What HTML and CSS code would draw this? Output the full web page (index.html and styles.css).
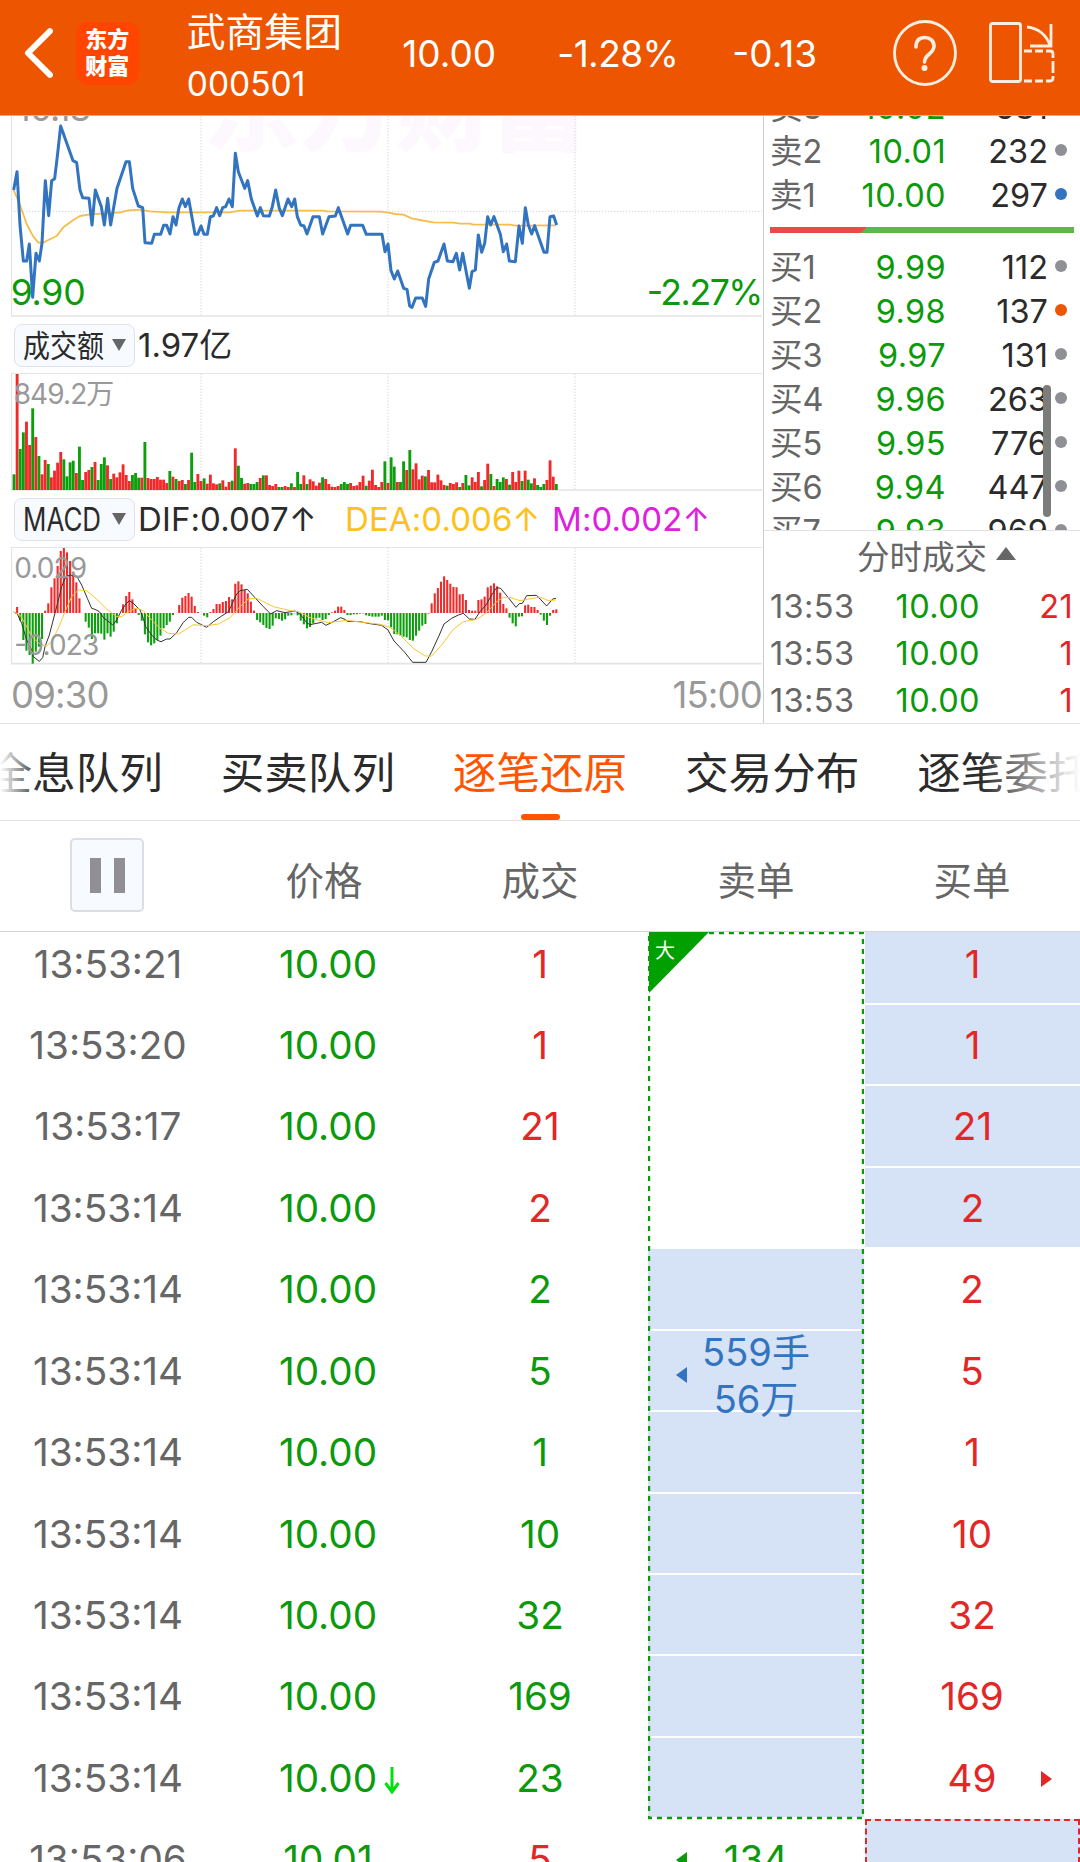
FILE: index.html
```html
<!DOCTYPE html>
<html lang="zh-CN">

<head>
  <meta charset="UTF-8" />
  <title>武商集团 000501</title>
  <meta name="viewport" content="width=device-width, initial-scale=1.0" />
  <link rel="stylesheet" href="styles.css">
</head>

<body>
  <header class="topbar">
    <svg class="back" viewBox="0 0 30 52"><path d="M26 4 L4 26 L26 48" /></svg>
    <div class="logo">东方<br>财富</div>
    <div class="stock">
      <div class="stock-name">武商集团</div>
      <div class="stock-code">000501</div>
    </div>
    <div class="quote">
      <span class="q-price">10.00</span>
      <span class="q-pct">-1.28%</span>
      <span class="q-diff">-0.13</span>
    </div>
    <svg class="help" viewBox="0 0 64 66">
      <ellipse cx="32" cy="33" rx="30.5" ry="31.5" />
      <path d="M23 27 C23 20 27 17.5 32 17.5 C37 17.5 41 21 41 26 C41 34 31.5 34 31.5 42" />
      <circle class="dot" cx="31.5" cy="48" r="3" />
    </svg>
    <svg class="rotate" viewBox="0 0 68 64">
      <rect x="2.5" y="2.5" width="30" height="58" rx="2" />
      <path d="M39 6 C50 7 59 14 62 25 M63 3 V25 H42" />
      <path d="M36 30 H44 M47 30 H55 M58 30 H62 Q65 30 65 33 V37 M65 40 V52 M65 55 V57 Q65 60 62 60 H58 M55 60 H47 M44 60 H36" />
    </svg>
  </header>

  <main>
    <section class="market">
      <div class="charts">
        <!-- chart units: 3 per pixel -->
        <svg class="price-chart" viewBox="33 18 2253 603">
          <text class="watermark" x="610" y="100">东方财富</text>
          <path class="grid" d="M603 18 V618 M1164 18 V618 M1725 18 V618 M33 304 H2286" />
          <path class="frame" d="M34 18 V618 H2286" />
          <text class="gray t35" x="49" y="32" textLength="225">10.13</text>
          <text class="green t35" x="32" y="585" textLength="225">9.90</text>
          <text class="green t35" x="1940" y="585" textLength="350">-2.27%</text>
          <polyline class="avg" points="41,240 60,285 80,342 100,380 115,398 130,398 145,390 170,378 190,352 220,330 240,318 270,313 320,310 360,307 385,301 420,299 450,304 500,307 690,307 720,302 970,302 980,304 1140,305 1165,308 1185,312 1210,314 1235,325 1260,330 1300,337 1360,338 1380,341 1410,341 1420,344 1530,344 1545,347 1668,346" />
          <polyline class="price" points="41,240 51,185 60,345 70,453 80,453 88,402 98,562 108,430 118,453 126,400 136,212 146,317 155,212 164,206 173,130 182,48 219,152 230,158 240,240 248,263 267,265 276,345 286,240 304,290 313,345 323,265 332,345 351,235 378,155 388,155 398,235 415,288 428,293 435,398 455,400 463,373 482,373 491,346 500,346 510,372 519,320 528,345 537,293 547,267 556,290 566,267 585,373 593,373 603,348 612,373 622,373 631,320 640,318 650,293 659,317 668,293 677,290 687,267 697,290 706,130 715,185 734,235 743,212 754,267 772,318 781,293 790,317 808,318 817,290 827,240 838,295 847,317 864,267 875,290 884,267 892,320 902,345 912,348 921,372 939,320 958,320 968,372 987,320 1006,318 1015,293 1043,372 1052,346 1088,346 1099,373 1146,373 1155,425 1164,402 1173,482 1183,507 1193,483 1211,535 1221,538 1229,588 1236,592 1247,564 1267,564 1277,589 1286,507 1303,457 1314,453 1332,402 1342,453 1359,455 1369,430 1379,480 1388,430 1408,535 1416,485 1426,480 1435,375 1445,427 1454,400 1463,320 1472,345 1482,320 1501,373 1510,425 1520,402 1528,453 1546,455 1557,348 1567,400 1576,293 1585,345 1595,372 1604,347 1632,427 1641,427 1650,320 1661,318 1670,345" />
        </svg>

        <div class="indicator">
          <button class="picker"><span class="squeeze cn">成交额</span><i class="caret"></i></button>
          <span class="amount">1.97亿</span>
        </div>

        <svg class="sub-chart" viewBox="33 0 2253 354">
          <path class="grid" d="M603 2 V351 M1164 2 V351 M1725 2 V351" />
          <path class="frame-top" d="M33 1.5 H2286" />
          <path class="frame" d="M34 0 V351 H2286" />
          <g id="volume"></g>
          <text class="gray t28" x="41" y="94" textLength="302">849.2万</text>
        </svg>

        <div class="indicator">
          <button class="picker"><span class="squeeze en">MACD</span><i class="caret"></i></button>
          <span class="dif">DIF:0.007↑</span>
          <span class="dea">DEA:0.006↑</span>
          <span class="m">M:0.002↑</span>
        </div>

        <svg class="sub-chart" viewBox="33 171 2253 354">
          <path class="grid" d="M603 173 V521 M1164 173 V521 M1725 173 V521" />
          <path class="frame-top" d="M33 172.5 H2286" />
          <path class="frame" d="M34 171 V521 H2286" />
          <g id="macd"></g>
          <polyline class="dif-line" points="41,366 52,372 65,400 80,450 95,480 100,500 118,514 128,503 135,470 148,435 155,408 170,350 185,290 193,270 200,258 212,255 232,262 245,285 262,325 275,355 285,358 298,365 312,385 320,390 338,405 350,390 365,360 378,342 388,332 400,340 420,360 430,385 437,410 455,435 470,450 483,455 500,447 510,447 530,428 550,397 566,382 575,382 590,397 620,412 640,395 665,378 685,365 695,345 708,315 720,302 742,298 765,323 790,350 812,372 830,362 855,368 885,363 900,372 920,398 930,404 965,397 978,406 1000,395 1022,383 1035,388 1042,394 1080,395 1110,401 1145,406 1164,420 1182,453 1215,488 1238,517 1278,517 1295,485 1318,435 1332,402 1355,385 1375,375 1390,370 1408,387 1425,388 1440,365 1458,345 1475,315 1490,293 1502,295 1525,323 1548,352 1558,341 1567,340 1580,317 1610,316 1640,348 1658,327 1668,325" />
          <polyline class="dea-line" points="41,366 60,375 75,400 95,440 120,462 140,468 155,455 175,415 195,365 215,320 235,300 260,302 285,323 320,357 350,380 365,380 385,365 410,354 430,362 455,390 480,415 505,430 535,432 560,417 580,404 620,407 655,402 690,383 720,350 745,327 770,325 820,350 870,362 895,365 935,385 985,398 1040,391 1140,403 1170,412 1200,435 1240,475 1275,498 1295,498 1325,465 1360,418 1390,395 1430,388 1460,368 1490,335 1510,322 1530,322 1560,332 1620,321 1645,332 1668,330" />
          <text class="gray t28" x="43" y="263" textLength="218">0.029</text>
          <text class="gray t28" x="43" y="495" textLength="255">-0.023</text>
        </svg>

        <div class="hours"><span>09:30</span><span>15:00</span></div>
      </div>

      <aside class="side">
        <div class="book">
          <div class="level"><span>卖3</span><b>10.02</b><em>681</em><i class="pt"></i></div>
          <div class="level"><span>卖2</span><b>10.01</b><em>232</em><i class="pt"></i></div>
          <div class="level"><span>卖1</span><b>10.00</b><em>297</em><i class="pt blue"></i></div>
          <div class="ratio"></div>
          <div class="level"><span>买1</span><b>9.99</b><em>112</em><i class="pt"></i></div>
          <div class="level"><span>买2</span><b>9.98</b><em>137</em><i class="pt orange"></i></div>
          <div class="level"><span>买3</span><b>9.97</b><em>131</em><i class="pt"></i></div>
          <div class="level"><span>买4</span><b>9.96</b><em>263</em><i class="pt"></i></div>
          <div class="level"><span>买5</span><b>9.95</b><em>776</em><i class="pt"></i></div>
          <div class="level"><span>买6</span><b>9.94</b><em>447</em><i class="pt"></i></div>
          <div class="level"><span>买7</span><b>9.93</b><em>969</em><i class="pt"></i></div>
          <div class="thumb"></div>
        </div>
        <div class="ticks-title">分时成交<i class="caret-up"></i></div>
        <div class="tick"><span>13:53</span><b>10.00</b><em>21</em></div>
        <div class="tick"><span>13:53</span><b>10.00</b><em>1</em></div>
        <div class="tick"><span>13:53</span><b>10.00</b><em>1</em></div>
      </aside>
    </section>

    <nav class="tabs">
      <a>全息队列</a>
      <a>买卖队列</a>
      <a class="active">逐笔还原</a>
      <a>交易分布</a>
      <a>逐笔委托</a>
    </nav>

    <div class="board-head">
      <div><button class="pause"><i></i><i></i></button></div>
      <div>价格</div>
      <div>成交</div>
      <div>卖单</div>
      <div>买单</div>
    </div>

    <section class="board">
      <div class="col time">
        <p>13:53:21</p>
        <p>13:53:20</p>
        <p>13:53:17</p>
        <p>13:53:14</p>
        <p>13:53:14</p>
        <p>13:53:14</p>
        <p>13:53:14</p>
        <p>13:53:14</p>
        <p>13:53:14</p>
        <p>13:53:14</p>
        <p>13:53:14</p>
        <p>13:53:06</p>
      </div>
      <div class="col cost">
        <p>10.00</p>
        <p>10.00</p>
        <p>10.00</p>
        <p>10.00</p>
        <p>10.00</p>
        <p>10.00</p>
        <p>10.00</p>
        <p>10.00</p>
        <p>10.00</p>
        <p>10.00</p>
        <p>10.00<svg class="down" viewBox="0 0 16 28"><path d="M8 1 V26 M1.5 17 L8 26 L14.5 17" /></svg></p>
        <p>10.01</p>
      </div>
      <div class="col deal">
        <p class="up">1</p>
        <p class="up">1</p>
        <p class="up">21</p>
        <p class="up">2</p>
        <p>2</p>
        <p>5</p>
        <p>1</p>
        <p>10</p>
        <p>32</p>
        <p>169</p>
        <p>23</p>
        <p class="up">5</p>
      </div>
      <div class="col sell">
        <p></p>
        <p></p>
        <p></p>
        <p></p>
        <p class="fill"></p>
        <p class="fill"></p>
        <p class="fill"></p>
        <p class="fill"></p>
        <p class="fill"></p>
        <p class="fill"></p>
        <p class="fill"></p>
        <p><i class="arrow-left"></i>134</p>
        <svg class="outline" viewBox="0 0 216 888">
          <path class="corner" d="M1 0 H61 L1 61 Z" />
          <rect x="1" y="1" width="214" height="885" />
          <text x="7" y="26">大</text>
        </svg>
        <div class="order"><i class="arrow-left"></i>559手<br>56万</div>
      </div>
      <div class="col buy">
        <p class="fill">1</p>
        <p class="fill">1</p>
        <p class="fill">21</p>
        <p class="fill">2</p>
        <p>2</p>
        <p>5</p>
        <p>1</p>
        <p>10</p>
        <p>32</p>
        <p>169</p>
        <p>49<i class="arrow-right"></i></p>
        <p class="fill boxed"></p>
      </div>
    </section>
  </main>

  <script src="charts.js"></script>
</body>

</html>
```
FILE: styles.css
```css
:root {
  --brand: #ed5500;
  --green: #0c990c;
  --red: #e32626;
  --blue: #3274c0;
  --gray: #999;
  --line: #e2e2e2;
  --fill: #d6e2f5;
}

* {
  box-sizing: border-box;
}

html,
body {
  margin: 0;
  padding: 0;
  height: 1862px;
  overflow: hidden;
}

body {
  width: 1080px;
  background: #fff;
  color: #2b2b2b;
  font-family: Inter, "Noto Sans CJK SC", sans-serif;
  font-size: 32px;
}

b,
em,
i {
  font-style: normal;
  font-weight: 400;
}

button {
  font: inherit;
  color: inherit;
  padding: 0;
}

svg {
  display: block;
}

/* top bar */
.topbar {
  display: flex;
  align-items: center;
  height: 116px;
  padding: 0 24px 9px;
  background: var(--brand);
  border-bottom: 1px solid #f5a67a;
  color: #fff;
}

.back {
  width: 30px;
  height: 52px;
}

.back path {
  fill: none;
  stroke: #fff;
  stroke-width: 6;
  stroke-linecap: round;
  stroke-linejoin: round;
}

.logo {
  width: 63px;
  height: 63px;
  margin-left: 22px;
  padding-top: 4px;
  border-radius: 12px;
  background: #ff4500;
  font-size: 22px;
  font-weight: 900;
  line-height: 27px;
  text-align: center;
}

.stock {
  width: 200px;
  margin-left: 48px;
}

.stock-name {
  margin-top: 8px;
  font-size: 38.8px;
  line-height: 53px;
}

.stock-code {
  font-size: 33.5px;
  line-height: 52px;
}

.quote {
  display: flex;
  width: 508px;
  padding: 2px 0 0 16px;
  font-size: 37px;
  line-height: 44px;
}

.q-price {
  width: 155px;
}

.q-pct {
  width: 175px;
  letter-spacing: -0.6px;
}

.help {
  width: 64px;
  height: 66px;
  flex: none;
}

.rotate {
  width: 68px;
  height: 64px;
  flex: none;
  margin-left: 31px;
}

.help ellipse,
.help path,
.rotate rect,
.rotate path {
  fill: none;
  stroke: #ffeee0;
  stroke-width: 2.8;
}

.help path {
  stroke-width: 3.6;
  stroke-linecap: round;
}

.help .dot {
  fill: #ffeee0;
}

/* charts */
.market {
  display: flex;
  height: 608px;
  border-bottom: 1px solid var(--line);
}

.charts {
  width: 763px;
  padding-left: 11px;
}

.price-chart {
  width: 751px;
  height: 201px;
}

.sub-chart {
  width: 751px;
  height: 118px;
}

.grid {
  fill: none;
  stroke: #d6d6d6;
  stroke-width: 3;
  stroke-dasharray: 4 5;
}

.frame,
.frame-top {
  fill: none;
  stroke: #e4e4e4;
  stroke-width: 5;
}

.frame-top {
  stroke-width: 3;
}

.watermark {
  font-size: 288px;
  font-weight: 900;
  fill: #fdf8fd;
}

.gray {
  fill: var(--gray);
}

.green {
  fill: var(--green);
}

.t35 {
  font-size: 107px;
}

.t28 {
  font-size: 84px;
}

.price,
.avg,
.dif-line,
.dea-line {
  fill: none;
  stroke-linejoin: round;
}

.price {
  stroke: var(--blue);
  stroke-width: 9;
}

.avg {
  stroke: #f6bd4e;
  stroke-width: 5.5;
}

.dif-line {
  stroke: #333;
  stroke-width: 3;
}

.dea-line {
  stroke: #fcc630;
  stroke-width: 3;
}

.bar-up {
  fill: #f22929;
}

.bar-down {
  fill: #0c9f0c;
}

.indicator {
  display: flex;
  align-items: center;
  height: 56px;
  padding-left: 3px;
  font-size: 33px;
  white-space: nowrap;
}

.picker {
  display: flex;
  align-items: center;
  justify-content: space-between;
  width: 121px;
  height: 43px;
  padding: 0 8px 0 8px;
  border: 1px solid #dfe2ea;
  border-radius: 8px;
  background: #f7faff;
}

.squeeze {
  width: 80px;
  transform-origin: left;
}

.cn {
  margin-top: -3px;
  font-size: 31px;
  transform: scaleX(0.87);
}

.en {
  font-size: 32px;
  transform: scaleX(0.81);
}

.caret {
  border: 7px solid transparent;
  border-top: 12px solid #666;
  border-bottom: 0;
}

.amount {
  margin: -4px 0 0 3px;
}

.dif,
.dea,
.m {
  width: 206px;
  margin-left: 3px;
  letter-spacing: 0.1px;
}

.dea {
  margin-left: 1px;
  color: #fcc21b;
}

.m {
  margin-left: 1px;
  color: #dc22dc;
}

.hours {
  display: flex;
  justify-content: space-between;
  padding-right: 1px;
  color: var(--gray);
  font-size: 36.5px;
  line-height: 61px;
  letter-spacing: -0.8px;
}

/* order book */
.side {
  width: 317px;
  border-left: 1px solid #ccc;
}

.book {
  position: relative;
  height: 415px;
  overflow: hidden;
  border-bottom: 1px solid var(--line);
}

.level {
  display: flex;
  align-items: center;
  height: 44px;
  padding-left: 6px;
  font-size: 32.5px;
  line-height: 46px;
}

.level:first-child {
  margin-top: -30px;
}

.level span {
  width: 61px;
  color: #666;
}

.level b {
  width: 115px;
  color: var(--green);
  text-align: right;
  letter-spacing: 0.4px;
}

.level em {
  width: 102px;
  text-align: right;
}

.pt {
  width: 12px;
  height: 12px;
  margin: 0 0 4px 7px;
  border-radius: 50%;
  background: #8f8f96;
}

.pt.blue {
  background: var(--blue);
}

.pt.orange {
  background: var(--brand);
}

.ratio {
  width: 304px;
  height: 6px;
  margin: 9px 0 13px 6px;
  background: linear-gradient(135deg, #e94b4b 68px, #5bb947 69px);
}

.thumb {
  position: absolute;
  left: 279px;
  top: 269px;
  width: 8px;
  height: 132px;
  border-radius: 4px;
  background: #7b7d7b;
}

.ticks-title {
  display: flex;
  align-items: center;
  height: 52px;
  padding: 0 0 5px 93px;
  color: #666;
  font-size: 32.5px;
}

.caret-up {
  margin: 0 0 3px 9px;
  border: 10px solid transparent;
  border-top: 0;
  border-bottom: 13px solid #666;
}

.tick {
  display: flex;
  height: 47px;
  padding-left: 6px;
  font-size: 32.5px;
  line-height: 47px;
  letter-spacing: 0.4px;
}

.tick span {
  width: 89px;
  color: #666;
}

.tick b {
  width: 121px;
  color: var(--green);
  text-align: right;
}

.tick em {
  width: 93px;
  color: var(--red);
  text-align: right;
}

/* tabs */
.tabs {
  position: relative;
  display: flex;
  gap: 57.8px;
  height: 97px;
  overflow: hidden;
  border-bottom: 1px solid var(--line);
  font-size: 43.6px;
  line-height: 100px;
  white-space: nowrap;
}

.tabs a {
  flex: none;
  display: flex;
  flex-direction: column;
  align-items: center;
  height: 96px;
}

.tabs a:first-child {
  margin-left: -11.5px;
}

.tabs .active {
  color: #ff5500;
}

.tabs .active::after {
  content: "";
  flex: none;
  width: 39px;
  height: 6px;
  margin-top: -10px;
  border-radius: 3px;
  background: #ff5500;
}

.tabs::after {
  content: "";
  position: absolute;
  inset: 0;
  background: linear-gradient(90deg, #fff, transparent 40px, transparent 980px, #fff);
}

/* trade board */
.board-head {
  display: grid;
  grid-template-columns: repeat(5, 216px);
  height: 111px;
  border-bottom: 1px solid #d4d4d4;
  color: #666;
  font-size: 38.5px;
  line-height: 120px;
  text-align: center;
}

.pause {
  display: flex;
  justify-content: center;
  gap: 13px;
  width: 74px;
  height: 74px;
  margin: 17px 0 0 70px;
  padding: 18px 0;
  border: 2px solid #dcdee6;
  border-radius: 5px;
  background: #f7faff;
}

.pause i {
  width: 11px;
  height: 35px;
  background: #8f8f94;
}

.board {
  display: grid;
  grid-template-columns: repeat(5, 216px);
  height: 930px;
  overflow: hidden;
  font-size: 38.7px;
}

.col {
  position: relative;
  color: var(--green);
  text-align: center;
}

.col p {
  position: relative;
  height: 81.45px;
  margin: 0;
  line-height: 81px;
}

.col p:first-child {
  margin-top: -8.5px;
}

.time {
  color: #666;
}

.cost {
  padding-left: 8px;
}

.down {
  position: absolute;
  left: 160px;
  top: 28px;
  width: 16px;
  height: 28px;
}

.down path {
  fill: none;
  stroke: #00e010;
  stroke-width: 3;
}

.up,
.buy {
  color: var(--red);
}

.fill {
  border-bottom: 2px solid #fff;
  background: var(--fill);
}

.buy .fill {
  margin-left: 1px;
}

.buy .boxed {
  border: 2px dashed var(--red);
}

.outline {
  position: absolute;
  left: 0;
  top: 0;
  width: 216px;
  height: 888px;
}

.outline rect {
  fill: none;
  stroke: var(--green);
  stroke-width: 2.4;
  stroke-dasharray: 5 5;
}

.corner {
  fill: #00a000;
}

.outline text {
  font-size: 20px;
  fill: #fff;
}

.order {
  position: absolute;
  left: 0;
  top: 397px;
  width: 216px;
  color: var(--blue);
  font-size: 38px;
  line-height: 47px;
}

.arrow-left,
.arrow-right {
  position: absolute;
  top: 33px;
  border: 8px solid transparent;
}

.arrow-left {
  left: 28px;
  border-left: 0;
  border-right: 11px solid currentColor;
}

.arrow-right {
  left: 177px;
  border-right: 0;
  border-left: 11px solid currentColor;
}

.order .arrow-left {
  top: 38px;
}
```
FILE: charts.js
```js
// one value per minute; positive is drawn red, negative green
const volume = [
  -47, 348, -123, -173, 205, 135, -245, 159, -102, 47, 90, -78, 38, 58, 82, 114, -92, -41, -83, -88,
  51, -130, -30, 54, 60, -69, 84, -30, -78, -98, 74, -33, 49, 38, 53, 77, 45, 27, -45, -51,
  -37, 37, -144, 36, 33, 33, 39, 31, 31, 21, -57, 40, -33, 27, 30, -18, 30, -112, -24, 48,
  27, -35, 19, 46, 20, 17, -20, 29, 10, 24, -28, 125, -73, -36, 19, 21, -18, -18, -24, 36,
  -44, 44, 15, 12, 18, -9, -9, 12, 9, -20, 9, -54, -18, 44, -18, 32, 26, 13, 22, -38,
  33, 18, 10, 9, 12, -18, -24, -18, 21, 12, 14, 24, 43, -13, 28, 61, 15, 9, 24, -86,
  21, -98, -70, 24, -24, -86, 60, -120, 62, 80, 32, 43, -41, 60, 23, 23, 46, 29, 15, -13,
  21, 18, 23, -9, 21, -45, -14, 38, 24, 54, -11, 30, 79, -48, 12, -33, -24, -38, 33, -16,
  54, 24, 58, -27, 58, -31, -20, 35, -15, -9, -18, 30, 89, 40, -18
];

const macd = [
  0, 18, -23, -81, -113, -126, -152, -116, -101, -78, 7, 29, 77, 104, 141, 186, 195, 182, 156, 124,
  92, 44, 0, -26, -44, -78, -61, -61, -62, -80, -61, -71, -56, -31, 0, 26, 51, 63, 41, 14,
  -6, -23, -64, -88, -97, -91, -81, -68, -46, -36, -26, -6, 0, 24, 46, 51, 60, 49, 21, 3,
  0, -8, -13, 3, 12, 27, 27, 33, 36, 48, 41, 88, 95, 86, 69, 59, 34, 7, -21, -28,
  -36, -45, -48, -38, -16, -18, -23, -19, -8, -7, -1, -7, -23, -34, -46, -42, -31, -16, -14, -21,
  -18, -6, 2, 7, 19, 19, 9, -6, -6, -4, -4, -2, -1, -7, -9, -11, -11, -11, -8, -21,
  -22, -43, -63, -64, -68, -71, -73, -81, -83, -68, -53, -38, -33, -2, 29, 59, 75, 94, 110, 99,
  88, 78, 77, 56, 57, 39, 9, 7, 7, 39, 41, 49, 77, 82, 89, 80, 61, 27, 14, -14,
  -31, -40, -11, -10, 23, 25, 18, 18, 9, -5, -23, -36, -8, 9, 11
];

const STEP = 9.35;

function addBar(group, index, y, height, width, up) {
  const rect = document.createElementNS("http://www.w3.org/2000/svg", "rect");
  rect.setAttribute("x", 42 + index * STEP - width / 2);
  rect.setAttribute("y", y);
  rect.setAttribute("width", width);
  rect.setAttribute("height", height);
  rect.setAttribute("class", up ? "bar-up" : "bar-down");
  group.appendChild(rect);
}

const volumeGroup = document.querySelector("#volume");
volume.forEach((v, i) => addBar(volumeGroup, i, 351 - Math.abs(v), Math.abs(v), 8.6, v > 0));

const macdGroup = document.querySelector("#macd");
macd.forEach((v, i) => addBar(macdGroup, i, v > 0 ? 369 - v : 369, Math.abs(v), 6.2, v > 0));
```
